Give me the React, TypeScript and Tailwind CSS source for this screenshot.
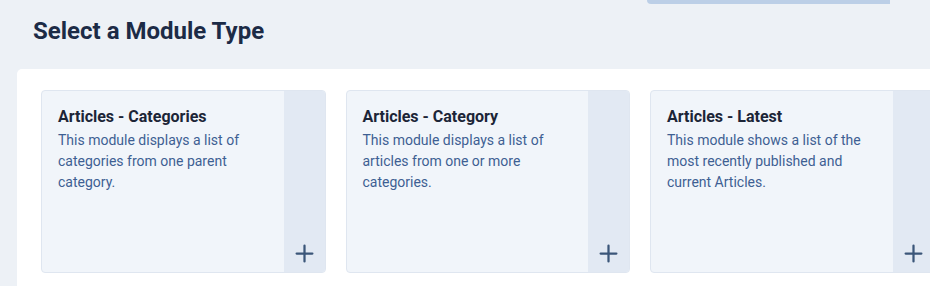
import { Plus } from "lucide-react";

const modules = [
  {
    title: "Articles - Categories",
    desc: "This module displays a list of categories from one parent category.",
  },
  {
    title: "Articles - Category",
    desc: "This module displays a list of articles from one or more categories.",
  },
  {
    title: "Articles - Latest",
    desc: "This module shows a list of the most recently published and current Articles.",
  },
];

export default function App() {
  return (
    <div className="relative h-[286px] w-[930px] overflow-hidden bg-[#edf1f6] font-['Roboto',sans-serif]">
      <div className="absolute left-[647px] top-0 h-[4px] w-[243px] rounded-bl-md bg-[#bccfe7]" />
      <h1 className="pl-[33px] pt-[16px] text-[24px] font-bold leading-[30px] text-[#1c2b46]">
        Select a Module Type
      </h1>
      <div className="ml-[17px] mt-[23px] flex h-[300px] gap-[20px] rounded-tl-[5px] bg-white pl-[24px] pt-[21px]">
        {modules.map((m, i) => (
          <div
            key={i}
            className="flex h-[183px] w-[284.5px] shrink-0 overflow-hidden rounded-[4px] border border-[#dfe6f0] bg-[#f1f5fa]"
          >
            <div className="flex-1 pl-[16px] pr-[12px] pt-[15px]">
              <div className="text-[16px] font-bold leading-[22px] text-[#1c2537]">{m.title}</div>
              <p className="mt-[2px] text-[14px] leading-[21px] text-[#3e5f93]">{m.desc}</p>
            </div>
            <div className="flex w-[41px] items-end justify-center bg-[#e2e9f3] pb-[5px]">
              <Plus size={27} strokeWidth={2} className="text-[#3b5679]" />
            </div>
          </div>
        ))}
      </div>
    </div>
  );
}
